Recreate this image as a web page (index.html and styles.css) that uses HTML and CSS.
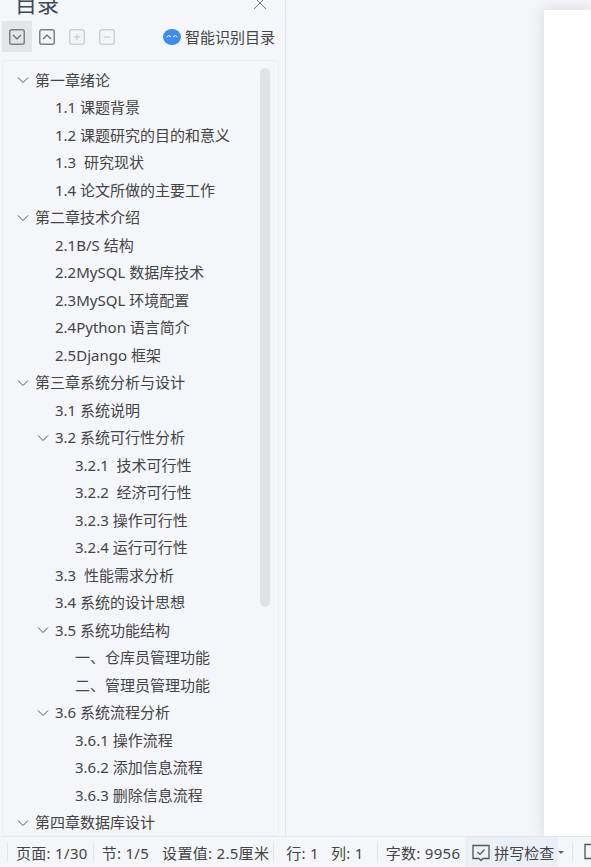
FILE: index.html
```html
<!DOCTYPE html>
<html lang="zh">
<head>
<meta charset="utf-8">
<title>目录</title>
<link rel="stylesheet" href="styles.css">
</head>
<body>
<div class="app">
  <div class="main">
    <aside class="panel">
      <div class="head">
        <span class="title">目录</span>
        <svg class="close" width="14" height="14" viewBox="0 0 14 14"><path d="M1 1 13 13M13 1 1 13" stroke="#777" fill="none"/></svg>
      </div>
      <div class="tools">
        <span class="tool active"><svg width="16" height="16" viewBox="0 0 16 16"><rect x=".75" y=".75" width="14.500" height="14.500" rx="2" fill="none" stroke="#808080" stroke-width="1.500"/><path d="M4 6l4 4 4-4" fill="none" stroke="#666" stroke-width="1.200"/></svg></span>
        <span class="tool"><svg width="16" height="16" viewBox="0 0 16 16"><rect x=".75" y=".75" width="14.500" height="14.500" rx="2" fill="none" stroke="#808080" stroke-width="1.500"/><path d="M4 10l4-4 4 4" fill="none" stroke="#666" stroke-width="1.200"/></svg></span>
        <span class="tool"><svg width="16" height="16" viewBox="0 0 16 16"><rect x=".75" y=".75" width="14.500" height="14.500" rx="2" fill="none" stroke="#d0d0d0" stroke-width="1.500"/><path d="M4.500 8h7M8 4.500v7" fill="none" stroke="#c4c4c4"/></svg></span>
        <span class="tool"><svg width="16" height="16" viewBox="0 0 16 16"><rect x=".75" y=".75" width="14.500" height="14.500" rx="2" fill="none" stroke="#d0d0d0" stroke-width="1.500"/><path d="M4.500 8h7" fill="none" stroke="#c4c4c4"/></svg></span>
        <span class="smart"><svg class="bot" width="18" height="16" viewBox="0 0 18 16"><ellipse cx="9" cy="8" rx="9" ry="8" fill="#3f8cf0"/><path d="M3.500 8l2.500-1.500L8 8M10 8l2.500-1.500L14.500 8" fill="none" stroke="#fff"/></svg>智能识别目录</span>
      </div>
      <div class="tree">
        <div class="thumb"></div>
        <div class="row l0"><svg class="chev" viewBox="0 0 12 12"><path d="M1 3.500l5 5 5-5" /></svg>第一章绪论</div>
        <div class="row l1">1.1 课题背景</div>
        <div class="row l1">1.2 课题研究的目的和意义</div>
        <div class="row l1">1.3 &nbsp;研究现状</div>
        <div class="row l1">1.4 论文所做的主要工作</div>
        <div class="row l0"><svg class="chev" viewBox="0 0 12 12"><path d="M1 3.500l5 5 5-5" /></svg>第二章技术介绍</div>
        <div class="row l1">2.1B/S 结构</div>
        <div class="row l1">2.2MySQL 数据库技术</div>
        <div class="row l1">2.3MySQL 环境配置</div>
        <div class="row l1">2.4Python 语言简介</div>
        <div class="row l1">2.5Django 框架</div>
        <div class="row l0"><svg class="chev" viewBox="0 0 12 12"><path d="M1 3.500l5 5 5-5" /></svg>第三章系统分析与设计</div>
        <div class="row l1">3.1 系统说明</div>
        <div class="row l1b"><svg class="chev" viewBox="0 0 12 12"><path d="M1 3.500l5 5 5-5" /></svg>3.2 系统可行性分析</div>
        <div class="row l2">3.2.1 &nbsp;技术可行性</div>
        <div class="row l2">3.2.2 &nbsp;经济可行性</div>
        <div class="row l2">3.2.3 操作可行性</div>
        <div class="row l2">3.2.4 运行可行性</div>
        <div class="row l1">3.3 &nbsp;性能需求分析</div>
        <div class="row l1">3.4 系统的设计思想</div>
        <div class="row l1b"><svg class="chev" viewBox="0 0 12 12"><path d="M1 3.500l5 5 5-5" /></svg>3.5 系统功能结构</div>
        <div class="row l2">一、仓库员管理功能</div>
        <div class="row l2">二、管理员管理功能</div>
        <div class="row l1b"><svg class="chev" viewBox="0 0 12 12"><path d="M1 3.500l5 5 5-5" /></svg>3.6 系统流程分析</div>
        <div class="row l2">3.6.1 操作流程</div>
        <div class="row l2">3.6.2 添加信息流程</div>
        <div class="row l2">3.6.3 删除信息流程</div>
        <div class="row l0"><svg class="chev" viewBox="0 0 12 12"><path d="M1 3.500l5 5 5-5" /></svg>第四章数据库设计</div>
      </div>
    </aside>
    <main class="doc"><div class="page"></div></main>
  </div>
  <footer class="status">
    <span class="sep first"></span>
    <span class="s s1">页面: 1/30</span>
    <span class="sep g1"></span>
    <span class="s s2">节: 1/5</span>
    <span class="s s3">设置值: 2.5厘米</span>
    <span class="sep g2"></span>
    <span class="s s4">行: 1</span>
    <span class="s s5">列: 1</span>
    <span class="sep g3"></span>
    <span class="s s6">字数: 9956</span>
    <span class="spell"><svg class="spell-icon" width="18" height="18" viewBox="0 0 18 18"><path d="M1 1.500h16v13h-6l-2 2-2-2H1z" fill="none" stroke="#555" stroke-width="1.300"/><path d="M5.500 8l2.500 2.500 4.500-5" fill="none" stroke="#555" stroke-width="1.200"/></svg>拼写检查</span>
    <i class="caret"></i>
    <span class="sep g4"></span>
    <svg class="last" width="12" height="18" viewBox="0 0 12 18"><path d="M12 1.500H1v14h11" fill="none" stroke="#555" stroke-width="1.300"/></svg>
  </footer>
</div>
</body>
</html>
```

FILE: styles.css
```css
* { box-sizing: border-box; }
html, body { margin: 0; height: 100%; }
body {
  font-family: "Noto Sans", "Noto Sans CJK SC", sans-serif;
  font-size: 15px;
  color: #444;
  background: #f4f5f8;
  overflow: hidden;
}
.app { width: 591px; height: 867px; display: flex; flex-direction: column; }
.main { flex: 0 0 836px; display: flex; overflow: hidden; }
.panel {
  width: 286px;
  flex: none;
  background: #f5f6f9;
  border-right: 1px solid #e6e7ea;
  display: flex;
  flex-direction: column;
  overflow: hidden;
}
.head { height: 22px; flex: none; display: flex; justify-content: space-between; align-items: flex-end; padding: 0 18px 0 15px; overflow: hidden; }
.title { font-size: 22px; line-height: 30px; color: #3d4757; margin-top: -12px; align-self: flex-start; }
.close { align-self: flex-start; margin-top: -4px; }
.tools { height: 31px; margin-top: -1px; flex: none; display: flex; align-items: center; padding: 0 10px 0 2px; }
.tool { width: 30px; height: 31px; display: flex; align-items: center; justify-content: center; }
.tool.active { background: #e4e5e8; }
.smart { margin-left: auto; display: flex; align-items: center; gap: 4px; font-size: 15px; color: #444; white-space: nowrap; }
.bot { flex: none; }
.tree {
  position: relative;
  margin: 8px 6px 0 2px;
  flex: 1;
  border: 1px solid #eceef1;
  border-radius: 3px;
  padding-top: 5.5px;
  overflow: hidden;
}
.thumb { position: absolute; left: 257px; top: 7px; width: 10px; height: 539px; border-radius: 5px; background: #e1e2e4; }
.row { height: 27.5px; line-height: 27.5px; white-space: nowrap; display: flex; align-items: center; }
.l0 { padding-left: 14px; }
.l1 { padding-left: 52px; }
.l1b { padding-left: 34px; }
.l2 { padding-left: 72px; }
.chev { width: 12px; height: 12px; margin-right: 6px; flex: none; }
.chev path { fill: none; stroke: #555; stroke-width: 1; }
.doc { flex: 1; position: relative; padding: 10px 0 0 258px; background: #f4f5f8; overflow: hidden; }
.page { height: 100%; background: #fff; box-shadow: 0 0 14px rgba(0,0,0,.12); }
.status {
  flex: 1;
  display: flex;
  align-items: center;
  padding-left: 7px;
  background: #f5f6f9;
  border-top: 1px solid #e6e7ea;
  white-space: nowrap;
  overflow: hidden;
  color: #444;
}
.s { display: block; letter-spacing: .3px; padding-top: 1px; }
.sep { width: 1px; height: 18px; background: #e2e3e6; flex: none; }
.s1 { margin-left: 8px; }
.g1 { margin-left: 5px; }
.s2 { margin-left: 8px; }
.s3 { margin-left: 13px; }
.g2 { margin-left: 4px; }
.s4 { margin-left: 12px; }
.s5 { margin-left: 12px; }
.g3 { margin-left: 13px; }
.s6 { margin-left: 8px; }
.spell { margin-left: 5px; height: 30px; padding: 1px 0 0 7px; width: 93px; display: flex; align-items: center; gap: 4px; background: #eaf0f8; flex: none; overflow: hidden; }
.spell-icon { flex: none; }
.caret { flex: none; width: 0; height: 0; border: 3px solid transparent; border-top-color: #666; margin-top: 4px; }
.g4 { margin-left: 8px; }
.last { margin-left: 11px; flex: none; }
```
